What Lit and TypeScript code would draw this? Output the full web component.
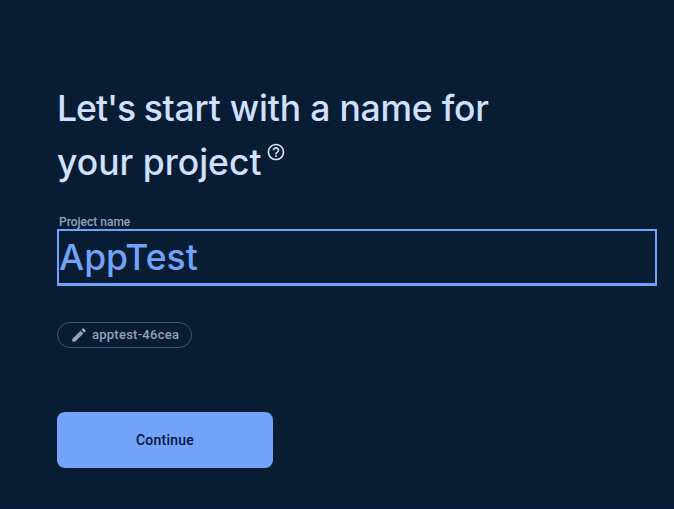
import { LitElement, html, css } from "lit";
import { customElement } from "lit/decorators.js";

@customElement("app-root")
class AppRoot extends LitElement {
  static styles = css`
    :host {
      display: flex;
      flex-direction: column;
      align-items: flex-start;
      box-sizing: border-box;
      width: 674px;
      height: 509px;
      padding: 82px 17px 0 57px;
      overflow: hidden;
      background: #081c33;
      border-bottom: 2px solid #071737;
      font-family: Roboto, "Liberation Sans", sans-serif;
      -webkit-font-smoothing: antialiased;
    }
    .title {
      margin: 0;
      color: #d0e0ff;
      font: 500 35.5px/54px Inter, sans-serif;
      white-space: nowrap;
    }
    .line {
      display: flex;
      align-items: flex-start;
      height: 54px;
      white-space: pre;
    }
    .tight {
      letter-spacing: -1px;
    }
    .rest {
      letter-spacing: -0.2px;
    }
    .help {
      width: 20px;
      height: 20px;
      margin: 6px 0 0 4px;
      fill: #d0e0ff;
    }
    .label {
      margin: 25px 0 0 2px;
      height: 14px;
      color: #8ea3c2;
      font-size: 12px;
      font-weight: 500;
      line-height: 14px;
    }
    .field {
      box-sizing: border-box;
      align-self: stretch;
      height: 57px;
      border: 2px solid #70a3f9;
      border-bottom-width: 3px;
      color: #70a3f9;
      font: 500 35.5px/53px Inter, sans-serif;
    }
    .chip {
      display: flex;
      align-items: center;
      box-sizing: border-box;
      width: 135px;
      height: 26px;
      margin-top: 36px;
      padding-left: 12px;
      border: 1px solid #40546f;
      border-radius: 13px;
      color: #8ea3c2;
      font-size: 13px;
      font-weight: 500;
      line-height: 24px;
      letter-spacing: 0.25px;
    }
    .pencil {
      width: 18px;
      height: 18px;
      margin-right: 4px;
      fill: #8ea3c2;
    }
    .continue {
      width: 216px;
      height: 56px;
      margin-top: 64px;
      padding: 0;
      border: 0;
      border-radius: 8px;
      background: #70a3f9;
      color: #04153b;
      font: 500 14px/56px Roboto, sans-serif;
      letter-spacing: 0.25px;
    }
  `;

  render() {
    return html`
      <h1 class="title">
        <span class="line"><span class="tight">Let's </span><span class="rest">start with a name for</span></span>
        <span class="line"><span>your project</span><svg class="help" viewBox="0 0 24 24">
            <path d="M11 18h2v-2h-2v2zm1-16C6.48 2 2 6.48 2 12s4.48 10 10 10 10-4.48 10-10S17.52 2 12 2zm0 18c-4.41 0-8-3.59-8-8s3.59-8 8-8 8 3.59 8 8-3.59 8-8 8zm0-14c-2.21 0-4 1.79-4 4h2c0-1.1.9-2 2-2s2 .9 2 2c0 2-3 1.75-3 5h2c0-2.25 3-2.5 3-5 0-2.21-1.79-4-4-4z" />
          </svg></span>
      </h1>
      <div class="label">Project name</div>
      <div class="field">AppTest</div>
      <div class="chip">
        <svg class="pencil" viewBox="0 0 24 24">
          <path d="M3 17.25V21h3.75L17.81 9.94l-3.75-3.75L3 17.25zM20.71 7.04c.39-.39.39-1.02 0-1.41l-2.34-2.34c-.39-.39-1.02-.39-1.41 0l-1.83 1.83 3.75 3.75 1.83-1.83z" />
        </svg>
        <span>apptest-46cea</span>
      </div>
      <button class="continue">Continue</button>
    `;
  }
}
